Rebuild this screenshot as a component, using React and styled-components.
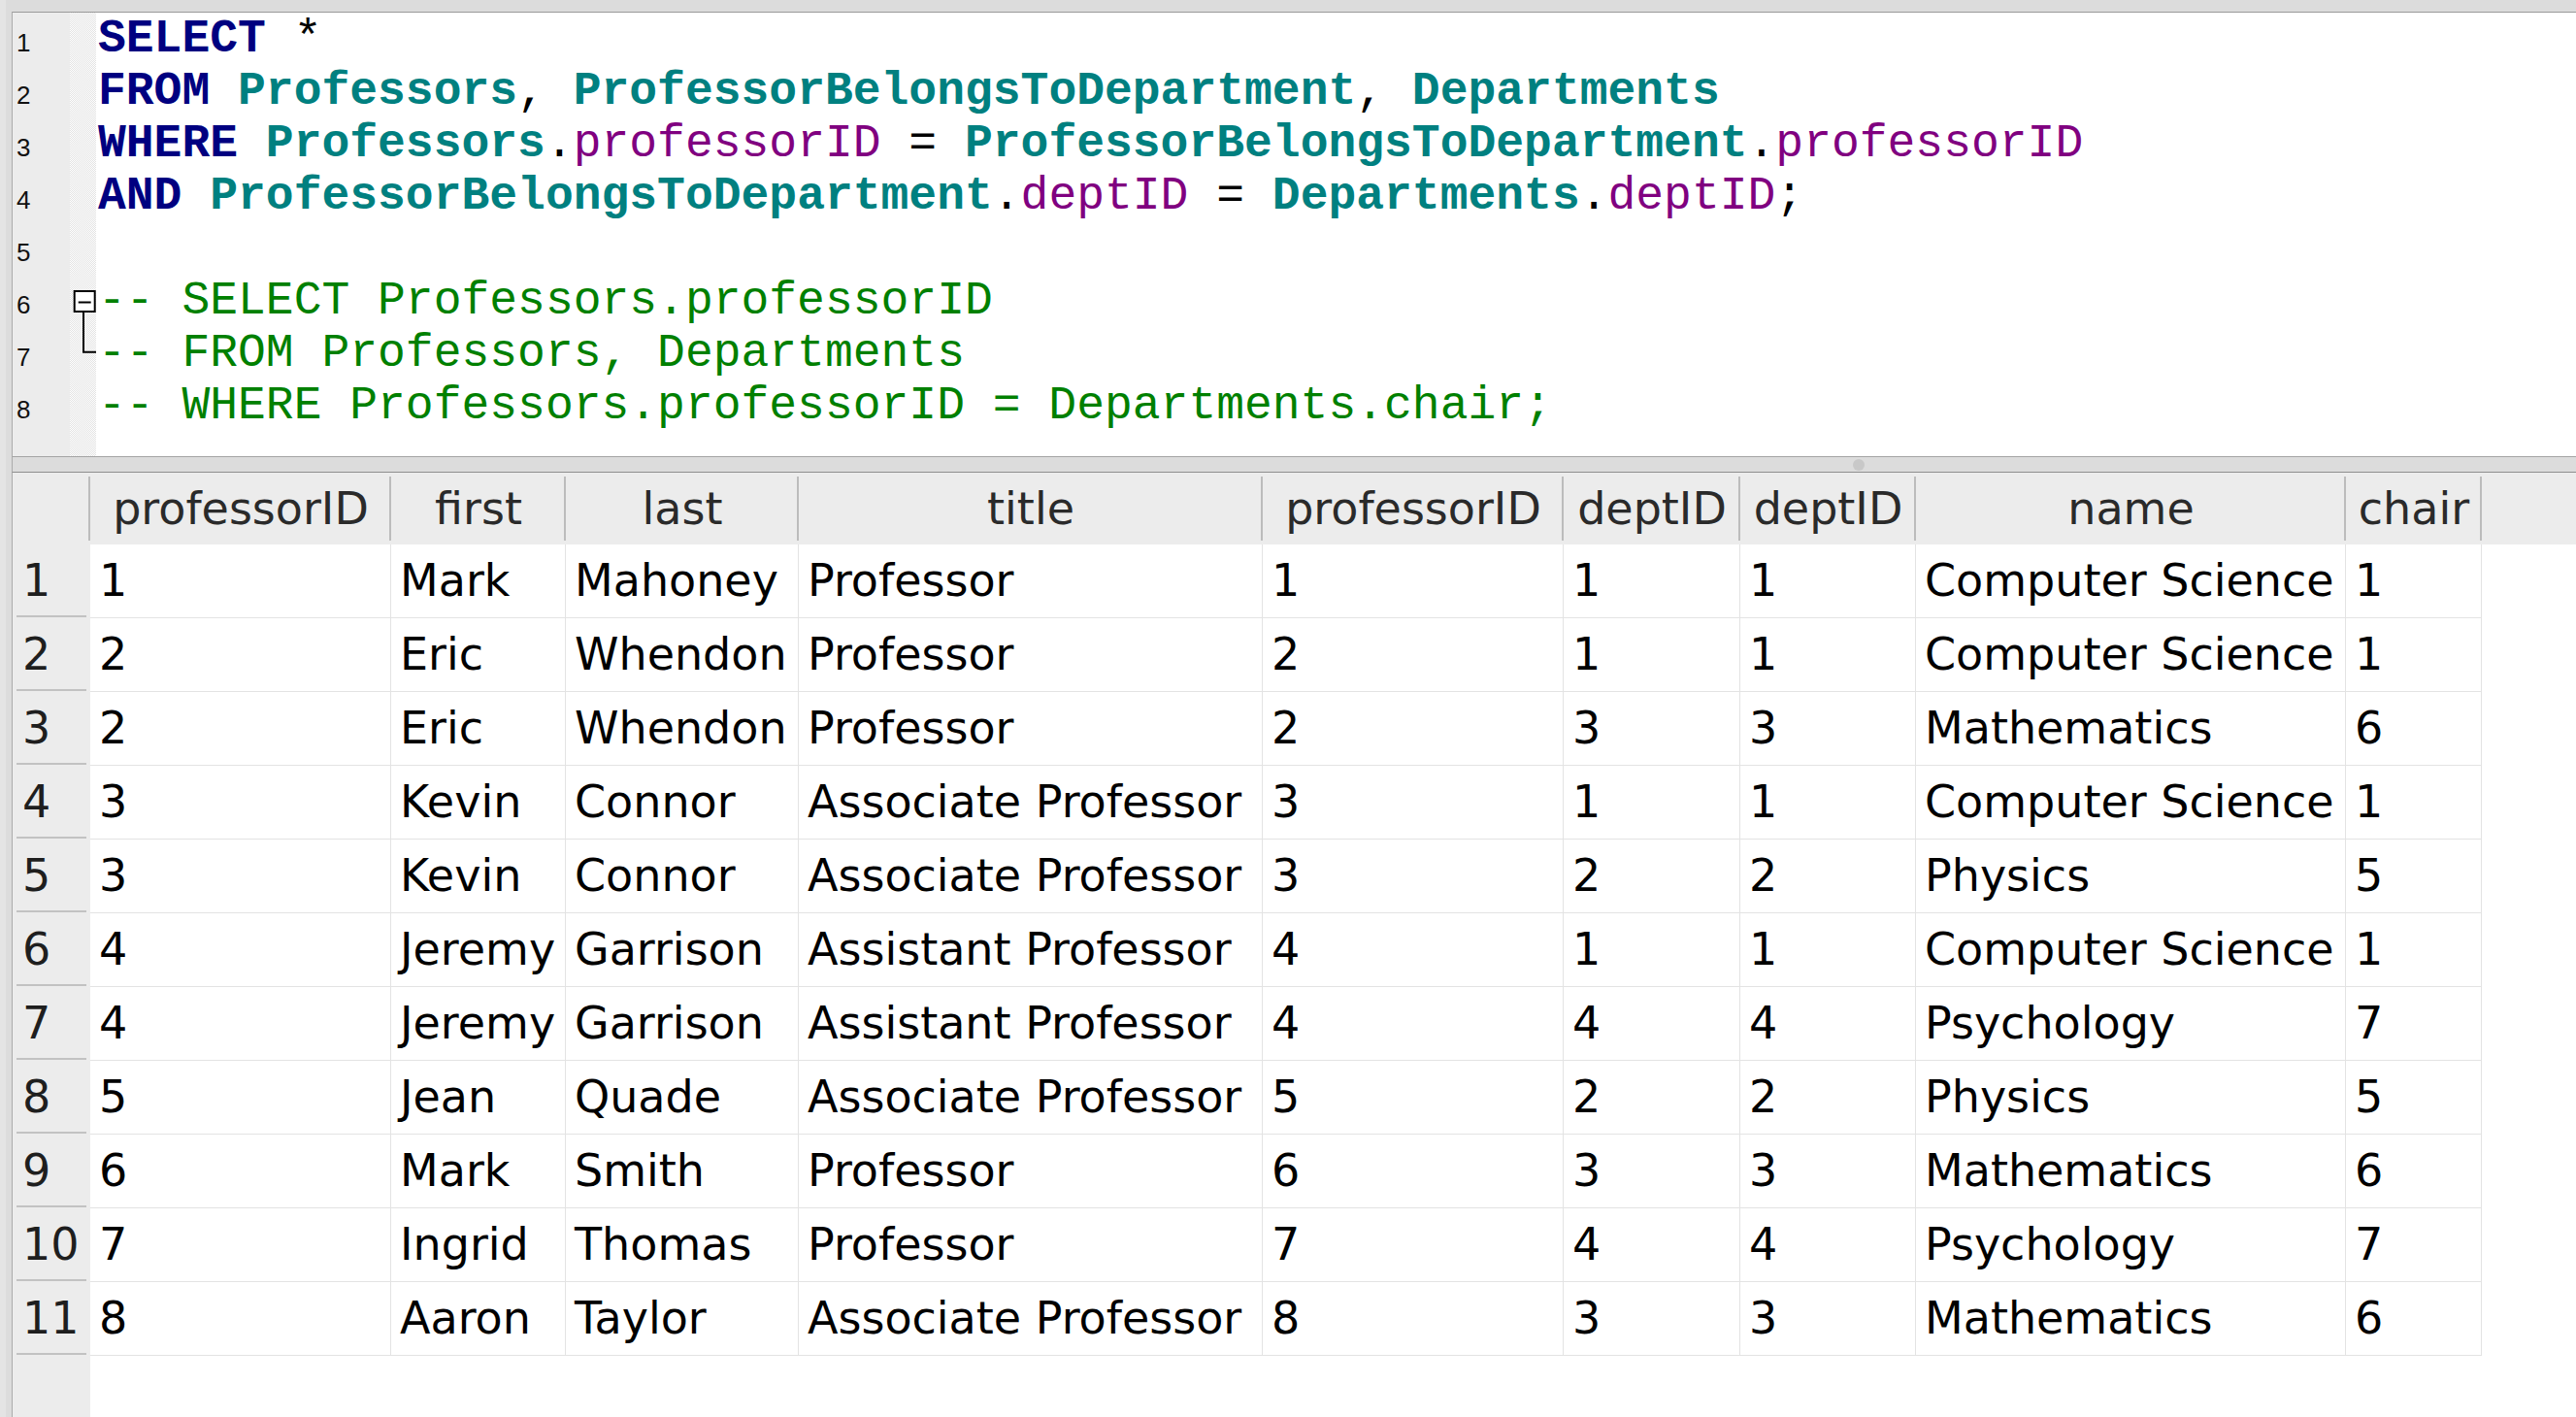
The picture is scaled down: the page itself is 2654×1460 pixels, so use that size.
import styled, { createGlobalStyle } from "styled-components";

const GlobalStyle = createGlobalStyle`
  html, body {
    margin: 0;
    padding: 0;
    height: 100%;
  }
  body {
    background: #dedede;
    overflow: hidden;
  }
  #root {
    height: 100%;
  }
`;

// widths of the result grid columns, row-number column first
const COLS = "80px 310px 180px 240px 478px 310px 182px 181px 443px 140px 1fr";

const HEADERS = [
  "professorID",
  "first",
  "last",
  "title",
  "professorID",
  "deptID",
  "deptID",
  "name",
  "chair",
];

const ROWS = [
  ["1", "Mark", "Mahoney", "Professor", "1", "1", "1", "Computer Science", "1"],
  ["2", "Eric", "Whendon", "Professor", "2", "1", "1", "Computer Science", "1"],
  ["2", "Eric", "Whendon", "Professor", "2", "3", "3", "Mathematics", "6"],
  ["3", "Kevin", "Connor", "Associate Professor", "3", "1", "1", "Computer Science", "1"],
  ["3", "Kevin", "Connor", "Associate Professor", "3", "2", "2", "Physics", "5"],
  ["4", "Jeremy", "Garrison", "Assistant Professor", "4", "1", "1", "Computer Science", "1"],
  ["4", "Jeremy", "Garrison", "Assistant Professor", "4", "4", "4", "Psychology", "7"],
  ["5", "Jean", "Quade", "Associate Professor", "5", "2", "2", "Physics", "5"],
  ["6", "Mark", "Smith", "Professor", "6", "3", "3", "Mathematics", "6"],
  ["7", "Ingrid", "Thomas", "Professor", "7", "4", "4", "Psychology", "7"],
  ["8", "Aaron", "Taylor", "Associate Professor", "8", "3", "3", "Mathematics", "6"],
];

const TOKEN_COLORS = {
  keyword: "#000080",
  table: "#008080",
  column: "#800080",
  comment: "#008000",
  plain: "#000000",
};

function SqlLines() {
  return [
    <>
      <Token $kind="keyword">SELECT</Token> *
    </>,
    <>
      <Token $kind="keyword">FROM</Token> <Token $kind="table">Professors</Token>,{" "}
      <Token $kind="table">ProfessorBelongsToDepartment</Token>,{" "}
      <Token $kind="table">Departments</Token>
    </>,
    <>
      <Token $kind="keyword">WHERE</Token> <Token $kind="table">Professors</Token>.
      <Token $kind="column">professorID</Token> ={" "}
      <Token $kind="table">ProfessorBelongsToDepartment</Token>.
      <Token $kind="column">professorID</Token>
    </>,
    <>
      <Token $kind="keyword">AND</Token>{" "}
      <Token $kind="table">ProfessorBelongsToDepartment</Token>.
      <Token $kind="column">deptID</Token> = <Token $kind="table">Departments</Token>.
      <Token $kind="column">deptID</Token>;
    </>,
    null,
    <Token $kind="comment">-- SELECT Professors.professorID</Token>,
    <Token $kind="comment">-- FROM Professors, Departments</Token>,
    <Token $kind="comment">-- WHERE Professors.professorID = Departments.chair;</Token>,
  ];
}

function FoldOpen() {
  return (
    <svg width="27" height="54" viewBox="0 0 27 54">
      <rect x="4.7" y="17" width="21" height="21" fill="#fff" stroke="#000" strokeWidth="2" />
      <line x1="8.7" y1="28.5" x2="21.7" y2="28.5" stroke="#000" strokeWidth="2" />
      <line x1="14" y1="39" x2="14" y2="54" stroke="#000" strokeWidth="2" />
    </svg>
  );
}

function FoldEnd() {
  return (
    <svg width="27" height="54" viewBox="0 0 27 54">
      <polyline points="14,0 14,25.7 27,25.7" fill="none" stroke="#000" strokeWidth="2" />
    </svg>
  );
}

export default function App() {
  const lines = SqlLines();

  return (
    <>
      <GlobalStyle />
      <Window>
        <Editor>
          <LineNumbers>
            {lines.map((_, i) => (
              <LineNumber key={i}>{i + 1}</LineNumber>
            ))}
          </LineNumbers>
          <FoldMargin>
            {lines.map((_, i) => (
              <FoldCell key={i}>
                {i === 5 && <FoldOpen />}
                {i === 6 && <FoldEnd />}
              </FoldCell>
            ))}
          </FoldMargin>
          <Code>
            {lines.map((line, i) => (
              <CodeLine key={i}>{line}</CodeLine>
            ))}
          </Code>
        </Editor>

        <Splitter>
          <Grip />
        </Splitter>

        <Grid>
          <HeaderRow>
            <HeaderCell $sep />
            {HEADERS.map((h, i) => (
              <HeaderCell key={i} $sep>
                {h}
              </HeaderCell>
            ))}
            <HeaderCell />
          </HeaderRow>

          {ROWS.map((row, r) => (
            <DataRow key={r}>
              <RowNumber>{r + 1}</RowNumber>
              {row.map((value, c) => (
                <Cell key={c}>{value}</Cell>
              ))}
              <Blank />
            </DataRow>
          ))}

          <GridFill />
        </Grid>
      </Window>
    </>
  );
}

const Window = styled.div`
  height: 100vh;
  box-sizing: border-box;
  display: flex;
  flex-direction: column;
  padding: 12px 0 0 12px;
  background: linear-gradient(#e4e4e4, #e4e4e4) left top / 6px 100% no-repeat,
    #dcdcdc;
`;

const Editor = styled.div`
  display: flex;
  flex-shrink: 0;
  height: 458px;
  box-sizing: border-box;
  background: #fff;
  border-top: 1px solid #9a9a9a;
  border-left: 1px solid #ababab;
  overflow: hidden;
`;

const LineNumbers = styled.div`
  width: 59px;
  flex-shrink: 0;
  background: #ececec;
  font-family: "Liberation Sans", Arial, sans-serif;
  font-size: 26px;
  color: #111;
`;

const LineNumber = styled.div`
  height: 54px;
  box-sizing: border-box;
  padding: 8px 0 0 4px;
  line-height: 46px;
`;

const FoldMargin = styled.div`
  width: 27px;
  flex-shrink: 0;
  background-color: #fff;
  background-image: repeating-conic-gradient(#e2e2e2 0 25%, #ffffff 0 50%);
  background-size: 2px 2px;
`;

const FoldCell = styled.div`
  height: 54px;

  svg {
    display: block;
  }
`;

const Code = styled.div`
  flex: 1;
  padding-left: 2px;
  font-family: "Liberation Mono", "Courier New", monospace;
  font-size: 48px;
  color: #000;
`;

const CodeLine = styled.div`
  height: 54px;
  line-height: 54px;
  white-space: pre;
`;

const Token = styled.span`
  color: ${(p) => TOKEN_COLORS[p.$kind]};
  font-weight: ${(p) => (p.$kind === "keyword" || p.$kind === "table" ? 700 : 400)};
`;

const Splitter = styled.div`
  flex-shrink: 0;
  height: 17px;
  box-sizing: border-box;
  display: flex;
  align-items: center;
  padding-left: 1896px;
  background: #dcdcdc;
  border-top: 1px solid #a4a4a4;
  border-bottom: 1px solid #8e8e8e;
  border-left: 1px solid #ababab;
`;

const Grip = styled.div`
  width: 12px;
  height: 12px;
  border-radius: 50%;
  background: #c8c8c8;
`;

const Grid = styled.div`
  flex: 1;
  display: flex;
  flex-direction: column;
  background: #fff;
  border-left: 1px solid #ababab;
  font-family: "DejaVu Sans", "Liberation Sans", sans-serif;
  font-size: 46px;
`;

const HeaderRow = styled.div`
  display: grid;
  grid-template-columns: ${COLS};
  height: 74px;
  flex-shrink: 0;
  background: #ececec;
  color: #2a2a2a;
`;

const HeaderCell = styled.div`
  line-height: 74px;
  text-align: center;
  white-space: nowrap;
  overflow: hidden;
  background: ${(p) =>
    p.$sep
      ? "linear-gradient(#bcbcbc, #bcbcbc) right center / 2px 66px no-repeat"
      : "none"};
`;

const DataRow = styled.div`
  display: grid;
  grid-template-columns: ${COLS};
  height: 76px;
  flex-shrink: 0;
`;

const RowNumber = styled.div`
  line-height: 75px;
  padding-left: 10px;
  color: #1e1e1e;
  background: linear-gradient(#c2c2c2, #c2c2c2) 4px calc(100% - 1px) / 72px 2px no-repeat,
    #ececec;
`;

const Cell = styled.div`
  box-sizing: border-box;
  line-height: 75px;
  padding-left: 9px;
  color: #000;
  white-space: nowrap;
  overflow: hidden;
  border-right: 1px solid #e3e3e3;
  border-bottom: 1px solid #e3e3e3;
`;

const Blank = styled.div``;

const GridFill = styled.div`
  flex: 1;
  background: linear-gradient(#ececec, #ececec) left top / 80px 100% no-repeat, #fff;
`;
